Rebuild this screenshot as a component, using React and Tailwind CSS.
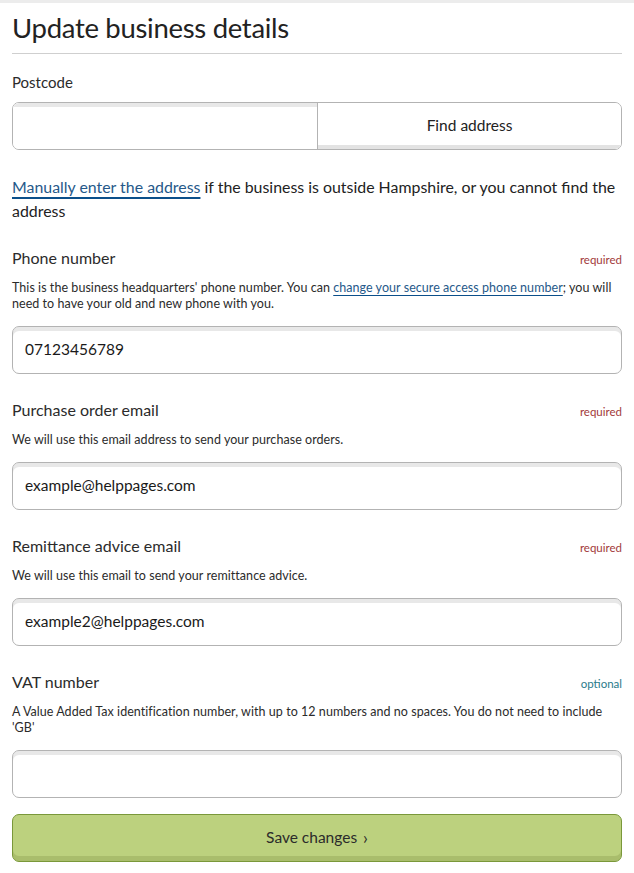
import React from "react";

const font = { fontFamily: "Lato, 'Noto Sans', sans-serif" };

function Field({ label, tag, tagColor, help, value, first }) {
  return (
    <div className={first ? "mt-[23px]" : "mt-[24px]"}>
      <div className="flex items-baseline justify-between">
        <span className="text-[16px] text-[#2b2b2b]">{label}</span>
        <span className={"text-[11.5px] " + tagColor}>{tag}</span>
      </div>
      <div className="mt-[10px] text-[12.5px] tracking-[0.05px] leading-[16px] text-[#2b2b2b]">{help}</div>
      <div className="mt-[14px] h-[48px] rounded-[7px] border border-[#b3b3b3] bg-white shadow-[inset_0_4px_0_#e8e8e8] flex items-center px-3 text-[15.5px] text-[#1a1a1a]">
        {value}
      </div>
    </div>
  );
}

export default function App() {
  return (
    <div style={font} className="w-[634px] min-h-[873px] bg-white border-t-[3px] border-[#ececec] px-3">
      <h1 className="pt-[7px] text-[27.5px] leading-[36px] text-[#222] tracking-[-0.3px]">Update business details</h1>
      <div className="mt-[7px] h-px bg-[#cfcfcf]" />
      <div className="mt-[17px] text-[15px] text-[#2b2b2b]">Postcode</div>
      <div className="mt-[8px] flex h-[48px] rounded-[7px] border border-[#b3b3b3] overflow-hidden">
        <div className="w-[304px] bg-white shadow-[inset_0_4px_0_#e8e8e8]" />
        <div className="flex-1 border-l border-[#b3b3b3] bg-white shadow-[inset_0_-4px_0_#e3e3e3] flex items-center justify-center text-[15.5px] text-[#222]">
          Find address
        </div>
      </div>
      <p className="mt-[25px] text-[15.9px] leading-[24px] text-[#222]">
        <a className="text-[#26598a] underline decoration-[#0b4f8a] decoration-[1.5px] underline-offset-[4px]">Manually enter the address</a> if the business is outside Hampshire, or you cannot find the address
      </p>
      <Field
        first
        label="Phone number"
        tag="required"
        tagColor="text-[#a23a3a]"
        help={
          <>
            This is the business headquarters' phone number. You can{" "}
            <a className="text-[#26598a] underline decoration-[#0b4f8a] underline-offset-[3px]">change your secure access phone number</a>; you will need to have your old and new phone with you.
          </>
        }
        value="07123456789"
      />
      <Field
        label="Purchase order email"
        tag="required"
        tagColor="text-[#a23a3a]"
        help="We will use this email address to send your purchase orders."
        value="example@helppages.com"
      />
      <Field
        label="Remittance advice email"
        tag="required"
        tagColor="text-[#a23a3a]"
        help="We will use this email to send your remittance advice."
        value="example2@helppages.com"
      />
      <Field
        label="VAT number"
        tag="optional"
        tagColor="text-[#2a7b8a]"
        help="A Value Added Tax identification number, with up to 12 numbers and no spaces. You do not need to include 'GB'"
        value=""
      />
      <button className="mt-[16px] w-full h-[48px] rounded-[7px] border border-[#7a983a] bg-[#bcd17e] shadow-[inset_0_-5px_0_#a9bd6c] flex items-center justify-center text-[15.5px] text-[#2b2b2b]">
        Save changes <span className="ml-[6px] text-[17px]">›</span>
      </button>
    </div>
  );
}
